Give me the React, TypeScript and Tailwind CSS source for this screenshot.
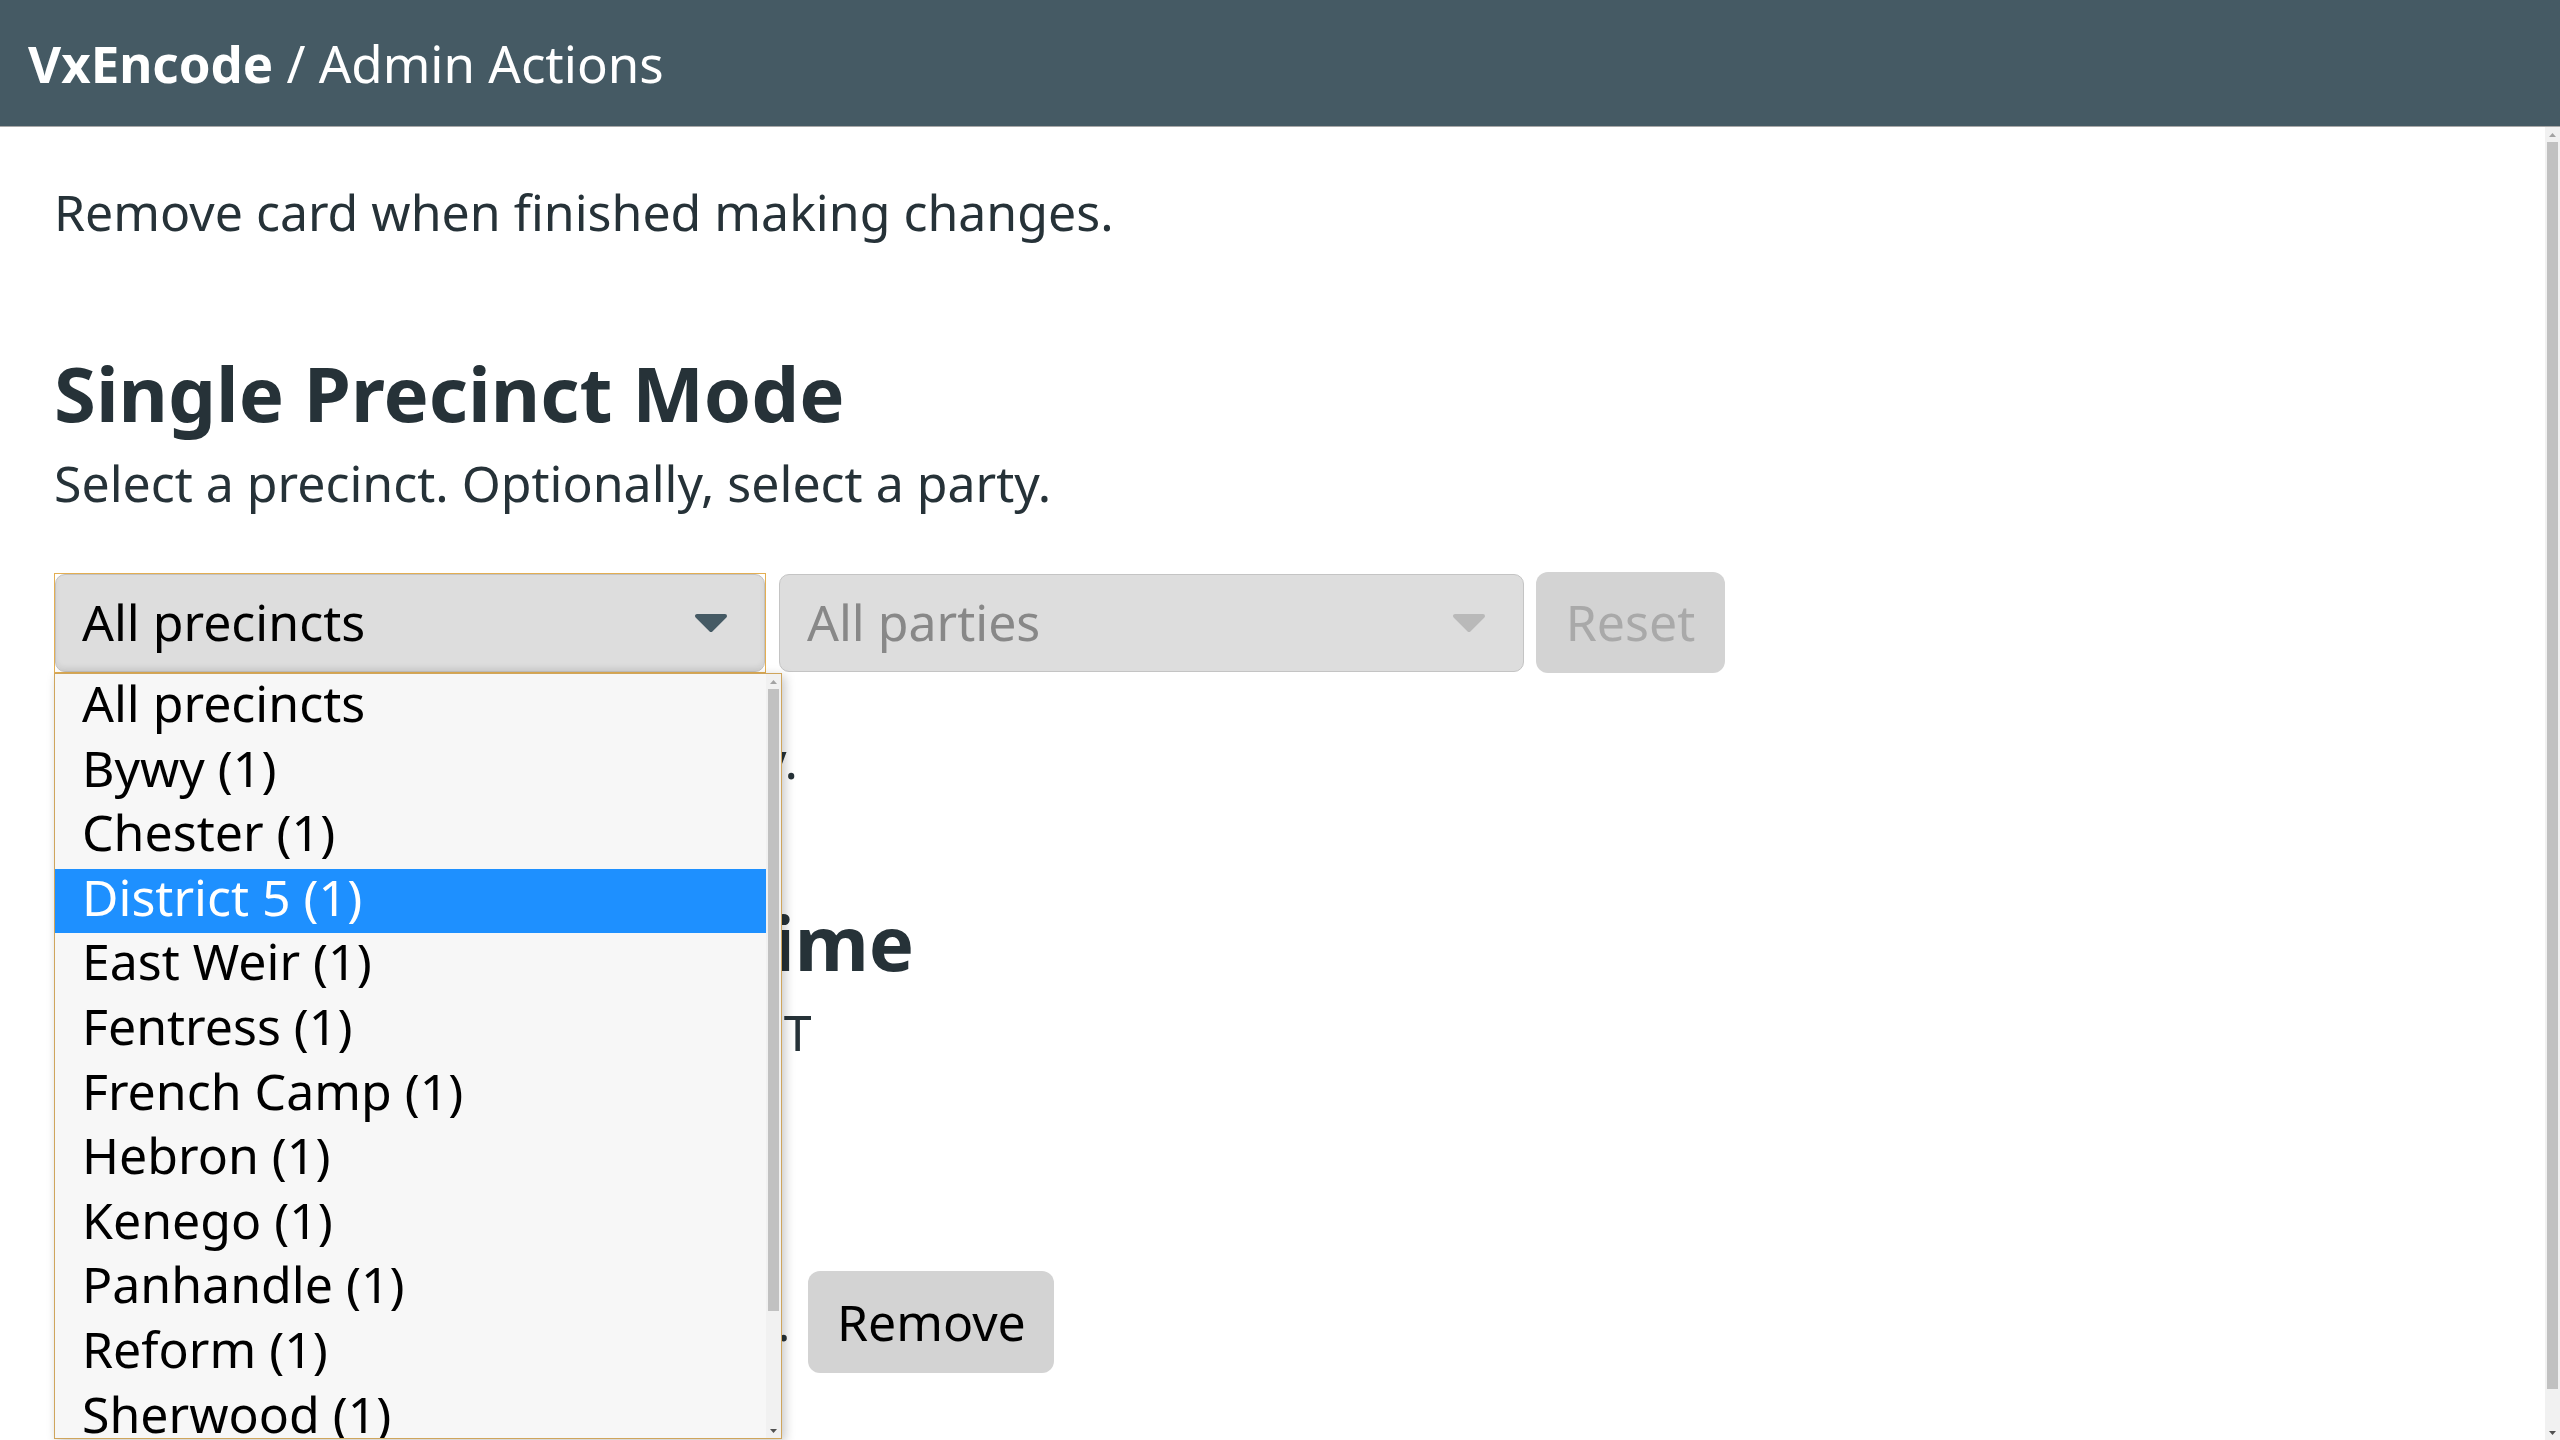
const precincts = [
  "All precincts",
  "Bywy (1)",
  "Chester (1)",
  "District 5 (1)",
  "East Weir (1)",
  "Fentress (1)",
  "French Camp (1)",
  "Hebron (1)",
  "Kenego (1)",
  "Panhandle (1)",
  "Reform (1)",
  "Sherwood (1)",
  "Southwest Ackerman (1)",
  "West Weir (1)",
];

function Caret({ color }: { color: string }) {
  return (
    <svg width="34" height="20" viewBox="0 0 34 20" className="shrink-0">
      <path
        d="M3 3 H31 L17 17 Z"
        fill={color}
        stroke={color}
        strokeWidth="4"
        strokeLinejoin="round"
      />
    </svg>
  );
}

function Arrow({ up, color }: { up: boolean; color: string }) {
  return (
    <div className="h-[15px] w-[15px] shrink-0 flex items-center justify-center">
      <svg width="7" height="4" viewBox="0 0 7 4">
        <path d={up ? "M0 4 L3.5 0 L7 4 Z" : "M0 0 L3.5 4 L7 0 Z"} fill={color} />
      </svg>
    </div>
  );
}

function ScrollBar({ thumb }: { thumb: string }) {
  return (
    <div className="w-[15px] shrink-0 bg-[#f1f1f1] flex flex-col items-center">
      <Arrow up color="#a3a3a3" />
      <div className={thumb} />
      <div className="flex-1" />
      <Arrow up={false} color="#505050" />
    </div>
  );
}

export default function App() {
  return (
    <div className="h-screen flex flex-col overflow-hidden bg-white font-['Noto_Sans',sans-serif] text-[#263238]">
      <header className="h-[127px] shrink-0 bg-[#455a64] border-b border-[#a8a8a8] pl-[28px] flex items-center text-white text-[51px] leading-[126px] whitespace-pre">
        <span className="font-bold">VxEncode</span>
        <span> / Admin Actions</span>
      </header>
      <main className="flex-1 min-h-0 flex">
        <div className="flex-1 min-w-0 overflow-hidden">
          <div className="relative px-[54px] pt-[53px] pb-[104px] text-[50px] leading-[65px]">
            <p>Remove card when finished making changes.</p>
            <h2 className="mt-[103px] text-[76px] leading-[90px] font-bold">Single Precinct Mode</h2>
            <p className="mt-[13px]">Select a precinct. Optionally, select a party.</p>
            <div className="mt-[56px] flex items-center h-[101px]">
              <div className="w-[712px] h-[100px] border border-[#e3ae52] shrink-0">
                <button className="w-full h-full rounded-[10px] border border-[#c2c2c2] bg-[#dddddd] shadow-[inset_0_-4px_5px_rgba(0,0,0,0.05)] flex items-center justify-between pl-[26px] pr-[36px] text-black text-[50px] leading-[65px]">
                  <span>All precincts</span>
                  <Caret color="#455a64" />
                </button>
              </div>
              <button
                disabled
                className="ml-[13px] w-[745px] h-[98px] shrink-0 rounded-[10px] border border-[#c4c4c4] bg-[#dddddd] flex items-center justify-between pl-[27px] pr-[37px] text-[#888888] text-[50px] leading-[65px]"
              >
                <span>All parties</span>
                <Caret color="#b9b9b9" />
              </button>
              <button
                disabled
                className="ml-[12px] w-[189px] h-[101px] shrink-0 rounded-[12px] bg-[#d3d3d3] text-[#a9a9a9] text-[50px] leading-[65px]"
              >
                Reset
              </button>
            </div>
            <p className="mt-[55px]">Current: all precincts, any party.</p>
            <h2 className="mt-[104px] text-[76px] leading-[90px] font-bold">Current Date and Time</h2>
            <p className="mt-[13px]">Tue, Nov 14, 2023, 10:15 AM PST</p>
            <div className="mt-[26px]">
              <button className="h-[102px] px-[28px] rounded-[12px] bg-[#d3d3d3] text-black text-[50px] leading-[65px]">
                Update Date and Time
              </button>
            </div>
            <div className="mt-[78px] flex items-center gap-[18px]">
              <span>An election definition is loaded.</span>
              <button className="h-[102px] w-[246px] rounded-[12px] bg-[#d3d3d3] text-black text-[50px] leading-[65px]">
                Remove
              </button>
            </div>

            <div className="absolute left-[54px] top-[546px] w-[728px] h-[766px] border border-[#cfa55c] bg-[#f7f7f7] flex shadow-[3px_3px_10px_rgba(0,0,0,0.22)]">
              <div className="flex-1 min-w-0 overflow-hidden pt-[1px]">
                {precincts.map((p) => (
                  <div
                    key={p}
                    className={
                      p === "District 5 (1)"
                        ? "h-[64.6px] pl-[27px] leading-[56px] whitespace-nowrap bg-[#1e90ff] text-white"
                        : "h-[64.6px] pl-[27px] leading-[56px] whitespace-nowrap text-black"
                    }
                  >
                    {p}
                  </div>
                ))}
              </div>
              <ScrollBar thumb="w-[11px] h-[622px] bg-[#c1c1c1]" />
            </div>
          </div>
        </div>
        <ScrollBar thumb="w-[11px] h-[1247px] bg-[#c1c1c1]" />
      </main>
    </div>
  );
}
